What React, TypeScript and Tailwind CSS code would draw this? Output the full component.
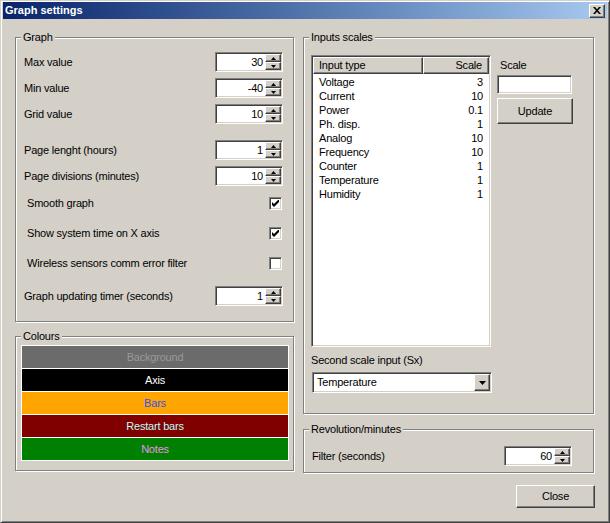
import React from 'react';

const sunken =
  'border border-t-[#808080] border-l-[#808080] border-r-white border-b-white shadow-[inset_1px_1px_0_#404040,inset_-1px_-1px_0_#d4d0c8]';
const raised =
  'border border-t-white border-l-white border-r-[#404040] border-b-[#404040] shadow-[inset_-1px_-1px_0_#808080]';

function GroupBox({
  label,
  className,
  children,
}: {
  label: string;
  className?: string;
  children?: React.ReactNode;
}) {
  return (
    <div
      className={`relative border border-[#808080] shadow-[1px_1px_0_#fff,inset_1px_1px_0_#fff] ${className ?? ''}`}
    >
      <span className="absolute -top-[7px] left-[5px] bg-[#d4d0c8] px-[2px] leading-[13px]">
        {label}
      </span>
      {children}
    </div>
  );
}

function SpinArrow({ up }: { up?: boolean }) {
  return (
    <div className={`flex h-[8px] items-center justify-center bg-[#d4d0c8] ${raised}`}>
      <svg width="5" height="3" viewBox="0 0 5 3">
        {up ? <path d="M2.5 0L5 3H0z" fill="#000" /> : <path d="M0 0h5L2.5 3z" fill="#000" />}
      </svg>
    </div>
  );
}

function Spinner({ value }: { value: string }) {
  return (
    <div className={`flex h-[20px] w-[68px] bg-white p-px ${sunken}`}>
      <span className="flex-1 pr-[2px] text-right leading-[16px]">{value}</span>
      <div className="flex w-[16px] flex-col">
        <SpinArrow up />
        <SpinArrow />
      </div>
    </div>
  );
}

function CheckBox({ checked }: { checked?: boolean }) {
  return (
    <div className={`mr-px flex h-[13px] w-[13px] items-center justify-center bg-white ${sunken}`}>
      {checked && (
        <svg width="7" height="7" viewBox="0 0 7 7">
          <path d="M0 2L2 4L7 -1V2L2 7L0 5Z" fill="#000" />
        </svg>
      )}
    </div>
  );
}

function SpinRow({ label, value, className }: { label: string; value: string; className?: string }) {
  return (
    <div className={`flex h-[20px] items-center justify-between ${className ?? ''}`}>
      <span>{label}</span>
      <Spinner value={value} />
    </div>
  );
}

function CheckRow({ label, checked, className }: { label: string; checked?: boolean; className?: string }) {
  return (
    <div className={`flex h-[13px] items-center justify-between pl-[3px] ${className ?? ''}`}>
      <span>{label}</span>
      <CheckBox checked={checked} />
    </div>
  );
}

const colours = [
  { name: 'Background', bg: 'bg-[#6b6b6b]', fg: 'text-[#999999]' },
  { name: 'Axis', bg: 'bg-black', fg: 'text-white' },
  { name: 'Bars', bg: 'bg-[#ffa500]', fg: 'text-[#2f4fff]' },
  { name: 'Restart bars', bg: 'bg-[#800000]', fg: 'text-[#b8ffff]' },
  { name: 'Notes', bg: 'bg-[#008000]', fg: 'text-[#f08ce8]' },
];

const inputs: [string, string][] = [
  ['Voltage', '3'],
  ['Current', '10'],
  ['Power', '0.1'],
  ['Ph. disp.', '1'],
  ['Analog', '10'],
  ['Frequency', '10'],
  ['Counter', '1'],
  ['Temperature', '1'],
  ['Humidity', '1'],
];

export default function App() {
  return (
    <div className="h-[523px] w-[610px] border border-t-[#d4d0c8] border-l-[#d4d0c8] border-r-[#404040] border-b-[#404040] bg-[#d4d0c8] p-px font-['Liberation_Sans',Arial,sans-serif] text-[11px] tracking-[-0.2px] text-black shadow-[inset_1px_1px_0_#fff,inset_-1px_-1px_0_#808080]">
      {/* Title bar */}
      <div className="mx-px flex h-[17px] items-center justify-between bg-gradient-to-r from-[#0a246a] to-[#a6caf0] pl-[2px] pr-[2px]">
        <span className="text-[11px] font-bold tracking-normal text-white">Graph settings</span>
        <div className={`flex h-[14px] w-[16px] items-center justify-center bg-[#d4d0c8] ${raised}`}>
          <svg width="8" height="7" viewBox="0 0 8 7">
            <path d="M0 0h2l2 2.3L6 0h2L5 3.5 8 7H6L4 4.7 2 7H0l3-3.5z" fill="#000" />
          </svg>
        </div>
      </div>

      <div className="flex pl-[13px] pt-[18px]">
        {/* Left column */}
        <div className="flex w-[279px] flex-col">
          <GroupBox label="Graph" className="h-[285px] pl-[8px] pr-[10px] pt-[14px]">
            <SpinRow label="Max value" value="30" />
            <SpinRow label="Min value" value="-40" className="mt-[6px]" />
            <SpinRow label="Grid value" value="10" className="mt-[6px]" />
            <SpinRow label="Page lenght (hours)" value="1" className="mt-[16px]" />
            <SpinRow label="Page divisions (minutes)" value="10" className="mt-[6px]" />
            <CheckRow label="Smooth graph" checked className="mt-[11px]" />
            <CheckRow label="Show system time on X axis" checked className="mt-[17px]" />
            <CheckRow label="Wireless sensors comm error filter" className="mt-[17px]" />
            <SpinRow label="Graph updating timer (seconds)" value="1" className="mt-[16px]" />
          </GroupBox>

          <GroupBox label="Colours" className="mt-[14px] h-[135px] pl-[5px] pt-[8px]">
            <div className="flex w-[268px] flex-col gap-px bg-white p-px">
              {colours.map((c) => (
                <div
                  key={c.name}
                  className={`flex h-[22px] items-center justify-center ${c.bg} ${c.fg}`}
                >
                  {c.name}
                </div>
              ))}
            </div>
          </GroupBox>
        </div>

        {/* Right column */}
        <div className="ml-[9px] flex w-[292px] flex-col">
          <GroupBox label="Inputs scales" className="h-[377px] w-[291px] pl-[7px] pt-[17px]">
            <div className="flex">
              <div className={`flex h-[292px] w-[180px] flex-col bg-white p-px ${sunken}`}>
                <div className="flex h-[17px] bg-[#d4d0c8]">
                  <div className={`flex w-[110px] items-center pl-[5px] ${raised}`}>Input type</div>
                  <div className={`flex flex-1 items-center justify-end pr-[6px] ${raised}`}>Scale</div>
                </div>
                <div className="flex flex-col pt-px">
                  {inputs.map(([name, scale]) => (
                    <div key={name} className="flex h-[14px] items-center leading-[14px]">
                      <span className="w-[110px] pl-[6px]">{name}</span>
                      <span className="flex-1 pr-[6px] text-right">{scale}</span>
                    </div>
                  ))}
                </div>
              </div>

              <div className="ml-[6px] flex flex-col pt-[3px]">
                <span className="ml-[3px] leading-[14px]">Scale</span>
                <div className={`mt-[3px] h-[19px] w-[75px] bg-white ${sunken}`} />
                <div
                  className={`mt-[4px] flex h-[26px] w-[76px] items-center justify-center bg-[#d4d0c8] ${raised}`}
                >
                  Update
                </div>
              </div>
            </div>

            <div className="mt-[6px] leading-[14px]">Second scale input (Sx)</div>
            <div className={`ml-px mt-[5px] flex h-[21px] w-[180px] items-center bg-white p-px ${sunken}`}>
              <span className="flex-1 pl-[3px]">Temperature</span>
              <div className={`flex h-[17px] w-[16px] items-center justify-center bg-[#d4d0c8] ${raised}`}>
                <svg width="7" height="4" viewBox="0 0 7 4">
                  <path d="M0 0h7L3.5 4z" fill="#000" />
                </svg>
              </div>
            </div>
          </GroupBox>

          <GroupBox label="Revolution/minutes" className="mt-[15px] h-[44px] w-[291px] pl-[8px] pr-[21px] pt-[16px]">
            <SpinRow label="Filter (seconds)" value="60" />
          </GroupBox>

          <div className="mt-[12px] flex justify-end">
            <div className={`flex h-[23px] w-[79px] items-center justify-center bg-[#d4d0c8] ${raised}`}>
              Close
            </div>
          </div>
        </div>
      </div>
    </div>
  );
}
